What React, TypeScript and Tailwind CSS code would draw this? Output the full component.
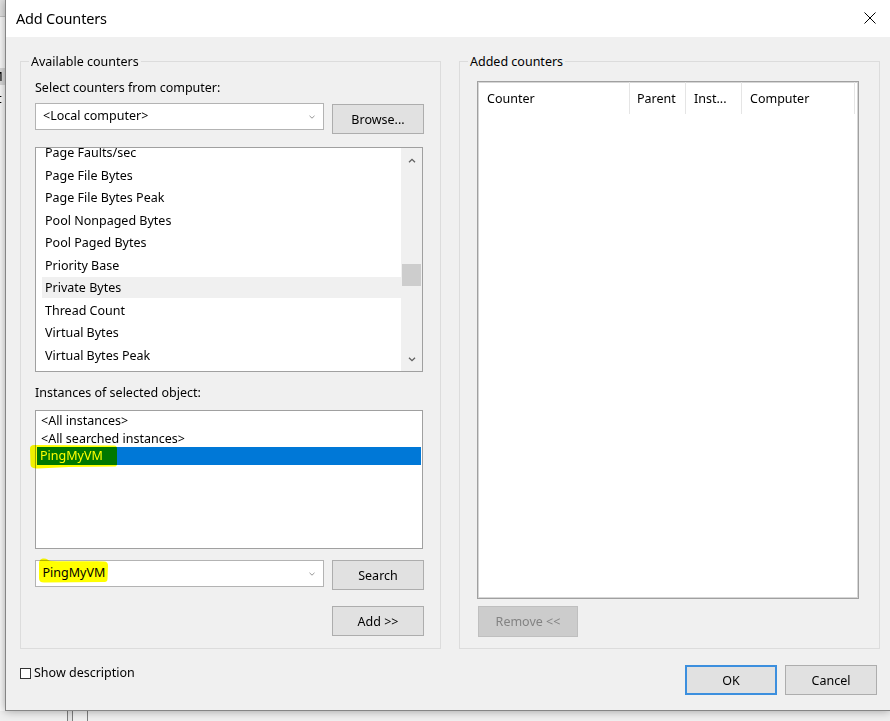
import React from "react";

const counters = [
  "Page Faults/sec",
  "Page File Bytes",
  "Page File Bytes Peak",
  "Pool Nonpaged Bytes",
  "Pool Paged Bytes",
  "Priority Base",
  "Private Bytes",
  "Thread Count",
  "Virtual Bytes",
  "Virtual Bytes Peak",
];

function ComboChevron() {
  return (
    <svg width="6" height="4" viewBox="0 0 6 4" className="shrink-0">
      <polyline points="0.5,0.8 3,3.2 5.5,0.8" fill="none" stroke="#8a8a8a" strokeWidth="0.9" />
    </svg>
  );
}

function ScrollChevron({ up }: { up?: boolean }) {
  return (
    <svg width="8" height="5" viewBox="0 0 8 5" className="shrink-0">
      <polyline
        points={up ? "1,4.3 4,1.3 7,4.3" : "1,0.7 4,3.7 7,0.7"}
        fill="none"
        stroke="#606060"
        strokeWidth="1.3"
      />
    </svg>
  );
}

function Button({ children, className = "" }: { children: React.ReactNode; className?: string }) {
  return (
    <div
      className={
        "w-[92px] h-[30px] shrink-0 border border-[#adadad] bg-[#e1e1e1] flex items-center justify-center leading-[17px] " +
        className
      }
    >
      {children}
    </div>
  );
}

export default function App() {
  return (
    <div className="relative w-[890px] h-[721px] overflow-hidden bg-[#efefef] font-['Noto_Sans',sans-serif] text-[12.5px] text-black">
      {/* background window remnants */}
      <div className="absolute left-0 top-0 w-[5px] h-[16px] bg-[#e2e2e2]" />
      <div className="absolute left-0 top-[16px] w-[5px] h-px bg-[#c4c4c4]" />
      <div className="absolute left-0 top-[17px] w-[5px] h-[694px] bg-[#fafafa]" />
      <div className="absolute left-0 top-[68px] w-[5px] h-[17px] bg-[#d9d9d9]" />
      <span className="absolute left-[-6px] top-[42px] leading-[17px] text-[13px]">s</span>
      <span className="absolute left-[-9px] top-[68px] leading-[17px] text-[13px]">M</span>
      <span className="absolute left-[-3px] top-[90px] leading-[17px] text-[13px]">t</span>
      <div className="absolute left-[67px] top-[711px] w-px h-[10px] bg-[#7d7d7d]" />
      <div className="absolute left-[68px] top-[711px] w-[4px] h-[10px] bg-[#e4e4e4]" />
      <div className="absolute left-[72px] top-[711px] w-px h-[10px] bg-[#7d7d7d]" />
      <div className="absolute left-[87px] top-[711px] w-px h-[10px] bg-[#7d7d7d]" />

      {/* dialog window */}
      <div className="absolute left-[5px] top-0 w-[885px] h-[711px] border-l border-b border-[#858585] shadow-[0_0_9px_rgba(0,0,0,0.35)] flex flex-col">
        {/* title bar */}
        <div className="h-[37px] shrink-0 bg-white flex items-start justify-between pl-[10px] pr-[14px]">
          <span className="pt-[7.5px] leading-[20px] text-[14.5px] tracking-[-0.2px]">Add Counters</span>
          <svg width="12" height="12" viewBox="0 0 12 12" className="mt-[12px]">
            <line x1="0.5" y1="0.5" x2="11.5" y2="11.5" stroke="#000" strokeWidth="1" />
            <line x1="11.5" y1="0.5" x2="0.5" y2="11.5" stroke="#000" strokeWidth="1" />
          </svg>
        </div>

        {/* body */}
        <div className="flex-1 bg-[#f0f0f0] flex flex-col">
          <div className="flex gap-[18px] pl-[14px] pt-[24px]">
            {/* Available counters */}
            <div className="relative w-[421px] h-[588px] shrink-0 border border-[#dcdcdc] flex flex-col pl-[14px]">
              <span className="absolute left-[8px] top-[-9.5px] px-[2px] bg-[#f0f0f0] leading-[17px]">
                Available counters
              </span>
              <div className="mt-[16.5px] leading-[17px]">Select counters from computer:</div>
              <div className="mt-[7.5px] flex items-start w-[389px]">
                <div className="w-[289px] h-[27px] shrink-0 border border-[#b3b3b3] bg-white flex items-center justify-between pl-[7px] pr-[8px]">
                  <span className="leading-[17px] mb-[3px]">&lt;Local computer&gt;</span>
                  <span className="mt-[1px] flex">
                    <ComboChevron />
                  </span>
                </div>
                <Button className="ml-[8px] mt-[1px]">Browse...</Button>
              </div>

              {/* counters list */}
              <div className="mt-[13px] h-[225px] w-[388px] shrink-0 border border-[#a0a0a0] bg-white flex overflow-hidden">
                <div className="flex-1 flex flex-col mt-[-6px] pl-[6px]">
                  {counters.map((c) => (
                    <div key={c} className="h-[22.5px] shrink-0">
                      <div
                        className={
                          "h-[21px] leading-[21px] pl-[3px] whitespace-nowrap " +
                          (c === "Private Bytes" ? "bg-[#f0f0f0]" : "")
                        }
                      >
                        {c}
                      </div>
                    </div>
                  ))}
                </div>
                <div className="w-[21px] shrink-0 bg-[#f0f0f0] flex flex-col items-center">
                  <div className="mt-[10px] flex">
                    <ScrollChevron up />
                  </div>
                  <div className="mt-[101px] w-[19px] h-[22px] bg-[#cdcdcd]" />
                  <div className="mt-[71px] flex">
                    <ScrollChevron />
                  </div>
                </div>
              </div>

              <div className="mt-[12px] leading-[17px]">Instances of selected object:</div>

              {/* instances list */}
              <div className="relative mt-[9px] h-[139px] w-[388px] shrink-0 border border-[#a0a0a0] bg-white pt-[1px] px-[1px]">
                <div className="h-[17.5px] leading-[17.5px] pl-[4px]">&lt;All instances&gt;</div>
                <div className="h-[17.5px] leading-[17.5px] pl-[4px]">&lt;All searched instances&gt;</div>
                <div className="h-[17.5px] leading-[17.5px] pl-[3px] bg-[#0078d7] text-white">PingMyVM</div>
                <svg
                  width="89"
                  height="25"
                  viewBox="0 0 89 25"
                  className="absolute left-[-7px] top-[33px] mix-blend-multiply pointer-events-none"
                >
                  <path
                    d="M1,5 C1,2 2.5,1 5,1 L85,1.5 C87.5,1.5 88,3 88,5 L88,20 C88,22 87,22.5 85,22.5 L40,23 L9,24.5 C4,24.5 1.5,23.5 1.5,20 Z"
                    fill="#ffff00"
                  />
                </svg>
              </div>

              {/* search row */}
              <div className="mt-[11px] flex items-start w-[389px]">
                <div className="relative w-[289px] h-[27px] shrink-0 border border-[#b3b3b3] bg-white flex items-center justify-between pl-[6.5px] pr-[8px]">
                  <span className="leading-[17px] mb-[2px]">PingMyVM</span>
                  <ComboChevron />
                  <svg
                    width="72"
                    height="27"
                    viewBox="0 0 72 27"
                    className="absolute left-[1px] top-[-4px] mix-blend-multiply pointer-events-none"
                  >
                    <path
                      d="M2,7 C2,3 4,1.5 7,1.5 C10,1.5 11,3.5 14,4 C30,4.5 50,4 67,4.5 C70,4.5 71,6 71,9 L70.5,22 C70.5,24.5 69,25 66,25 L7,25.5 C3.5,25.5 2,24 2,21 Z"
                      fill="#ffff00"
                    />
                  </svg>
                </div>
                <Button className="ml-[8px]">Search</Button>
              </div>

              <div className="mt-[16px] w-[389px] flex justify-end">
                <Button>Add &gt;&gt;</Button>
              </div>
            </div>

            {/* Added counters */}
            <div className="relative w-[421px] h-[588px] shrink-0 border border-[#dcdcdc] flex flex-col pl-[17px] pt-[19px]">
              <span className="absolute left-[8px] top-[-9.5px] px-[2px] bg-[#f0f0f0] leading-[17px]">
                Added counters
              </span>
              <div className="h-[518px] w-[382px] shrink-0 border border-[#a0a0a0] bg-white shadow-[inset_0_0_0_1px_#d6d6d6]">
                <div className="h-[32px] flex leading-[17px]">
                  <div className="w-[152px] pl-[9px] flex items-center border-r border-[#e5e5e5]">Counter</div>
                  <div className="w-[56px] pl-[7px] flex items-center border-r border-[#e5e5e5]">Parent</div>
                  <div className="w-[56px] pl-[8px] flex items-center border-r border-[#e5e5e5]">Inst...</div>
                  <div className="w-[113px] pl-[8px] flex items-center border-r border-[#e5e5e5]">Computer</div>
                </div>
              </div>
              <div className="mt-[7px] ml-[1px] w-[100px] h-[31px] border border-[#bfbfbf] bg-[#cccccc] text-[#838383] flex items-center justify-center leading-[17px]">
                Remove &lt;&lt;
              </div>
            </div>
          </div>

          {/* bottom row */}
          <div className="mt-[16px] flex items-start pl-[14px] pr-[13px]">
            <div className="mt-[2.5px] w-[11px] h-[11px] border border-[#333333] bg-white shrink-0" />
            <span className="ml-[3px] mt-[-1px] leading-[17px]">Show description</span>
            <div className="ml-auto flex gap-[8px]">
              <div className="w-[92px] h-[30px] border-2 border-[#3c8fde] bg-[#e1e1e1] flex items-center justify-center leading-[17px]">
                OK
              </div>
              <Button>Cancel</Button>
            </div>
          </div>
        </div>
      </div>
    </div>
  );
}
